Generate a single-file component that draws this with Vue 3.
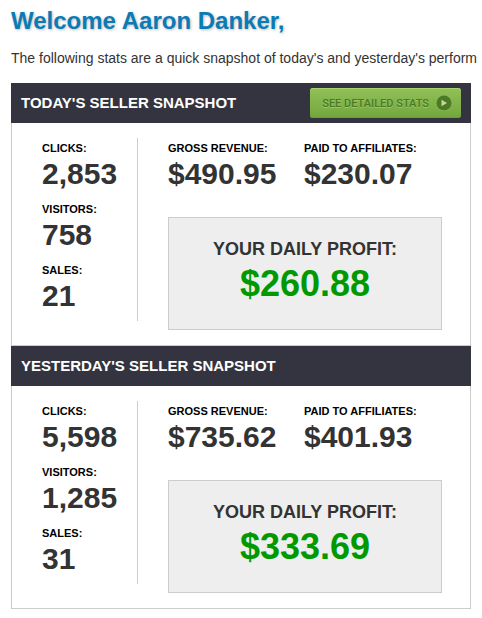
<script setup>
const snapshots = [
  {
    title: "TODAY'S SELLER SNAPSHOT",
    detailed: true,
    counts: [
      { label: 'CLICKS:', value: '2,853' },
      { label: 'VISITORS:', value: '758' },
      { label: 'SALES:', value: '21' },
    ],
    money: [
      { label: 'GROSS REVENUE:', value: '$490.95' },
      { label: 'PAID TO AFFILIATES:', value: '$230.07' },
    ],
    profit: '$260.88',
  },
  {
    title: "YESTERDAY'S SELLER SNAPSHOT",
    detailed: false,
    counts: [
      { label: 'CLICKS:', value: '5,598' },
      { label: 'VISITORS:', value: '1,285' },
      { label: 'SALES:', value: '31' },
    ],
    money: [
      { label: 'GROSS REVENUE:', value: '$735.62' },
      { label: 'PAID TO AFFILIATES:', value: '$401.93' },
    ],
    profit: '$333.69',
  },
]
</script>

<template>
  <main class="page">
    <h1 class="welcome">Welcome Aaron Danker,</h1>
    <p class="intro">The following stats are a quick snapshot of today's and yesterday's perform</p>

    <section v-for="s in snapshots" :key="s.title" class="panel">
      <header class="bar">
        <h2 class="bar-title">{{ s.title }}</h2>
        <a v-if="s.detailed" class="details" href="#">
          <span>SEE DETAILED STATS</span>
          <svg class="arrow" viewBox="0 0 16 16" aria-hidden="true">
            <circle cx="8" cy="8.6" r="7.4" fill="#9cc766" />
            <circle cx="8" cy="8" r="7.5" fill="#4b7a26" />
            <path d="M5.5 4.8 L11 8 L5.5 11.2 Z" fill="#c9d69a" />
          </svg>
        </a>
      </header>
      <div class="body">
        <dl class="counts">
          <div v-for="c in s.counts" :key="c.label">
            <dt class="label">{{ c.label }}</dt>
            <dd class="value">{{ c.value }}</dd>
          </div>
        </dl>
        <div class="earnings">
          <dl class="money">
            <div v-for="m in s.money" :key="m.label">
              <dt class="label">{{ m.label }}</dt>
              <dd class="value">{{ m.value }}</dd>
            </div>
          </dl>
          <div class="profit">
            <h3 class="profit-title">YOUR DAILY PROFIT:</h3>
            <p class="profit-value">{{ s.profit }}</p>
          </div>
        </div>
      </div>
    </section>
  </main>
</template>

<style>
body {
  margin: 0;
  background: #fff;
}
</style>

<style scoped>
.page {
  padding: 6px 11px 9px;
  color: #333;
  font-family: "Liberation Sans", Arial, sans-serif;
}
h1, h2, h3, p, dl, dd {
  margin: 0;
}
.welcome {
  color: #0a7bb5;
  font-size: 24px;
  line-height: 30px;
  text-shadow: 1px 1px 3px #bbb;
}
.intro {
  margin: 12px 0 15px;
  font-size: 14px;
  line-height: 20px;
  white-space: nowrap;
}
.bar {
  display: flex;
  align-items: center;
  justify-content: space-between;
  height: 40px;
  padding: 0 10px;
  background: #333440;
}
.bar-title {
  color: #fff;
  font-size: 15px;
  line-height: 20px;
}
.details {
  display: flex;
  align-items: center;
  gap: 7px;
  box-sizing: border-box;
  height: 30px;
  padding: 0 9px 0 12px;
  border-radius: 3px;
  background: linear-gradient(#92c058, #72a73d);
  box-shadow: inset 0 1px 0 #a9d071, inset 0 -1px 0 #6b9c3a;
  color: #4b7a26;
  font-family: Roboto, sans-serif;
  font-size: 11px;
  font-weight: 500;
  text-decoration: none;
  text-shadow: 0 1px 0 #9cc766;
  white-space: nowrap;
}
.arrow {
  width: 16px;
  height: 16px;
}
.body {
  display: flex;
  gap: 30px;
  padding: 15px 28px 24px 30px;
  border: 1px solid #ccc;
  border-top: 0;
}
.counts {
  display: flex;
  flex-direction: column;
  gap: 9px;
  box-sizing: border-box;
  width: 96px;
  padding-bottom: 9px;
  border-right: 1px solid #ccc;
}
.earnings {
  flex: 1;
}
.money {
  display: grid;
  grid-template-columns: 136px 1fr;
}
.label {
  color: #000;
  font-size: 11px;
  font-weight: bold;
  line-height: 20px;
  white-space: nowrap;
}
.value {
  font-size: 30px;
  font-weight: bold;
  line-height: 32px;
}
.profit {
  margin: 27px 0 -9px;
  padding: 18px 0 23px;
  border: 1px solid #ccc;
  background: #eee;
  text-align: center;
}
.profit-title {
  font-size: 18px;
  line-height: 26px;
}
.profit-value {
  color: #090;
  font-size: 36px;
  font-weight: bold;
  line-height: 44px;
}
</style>
